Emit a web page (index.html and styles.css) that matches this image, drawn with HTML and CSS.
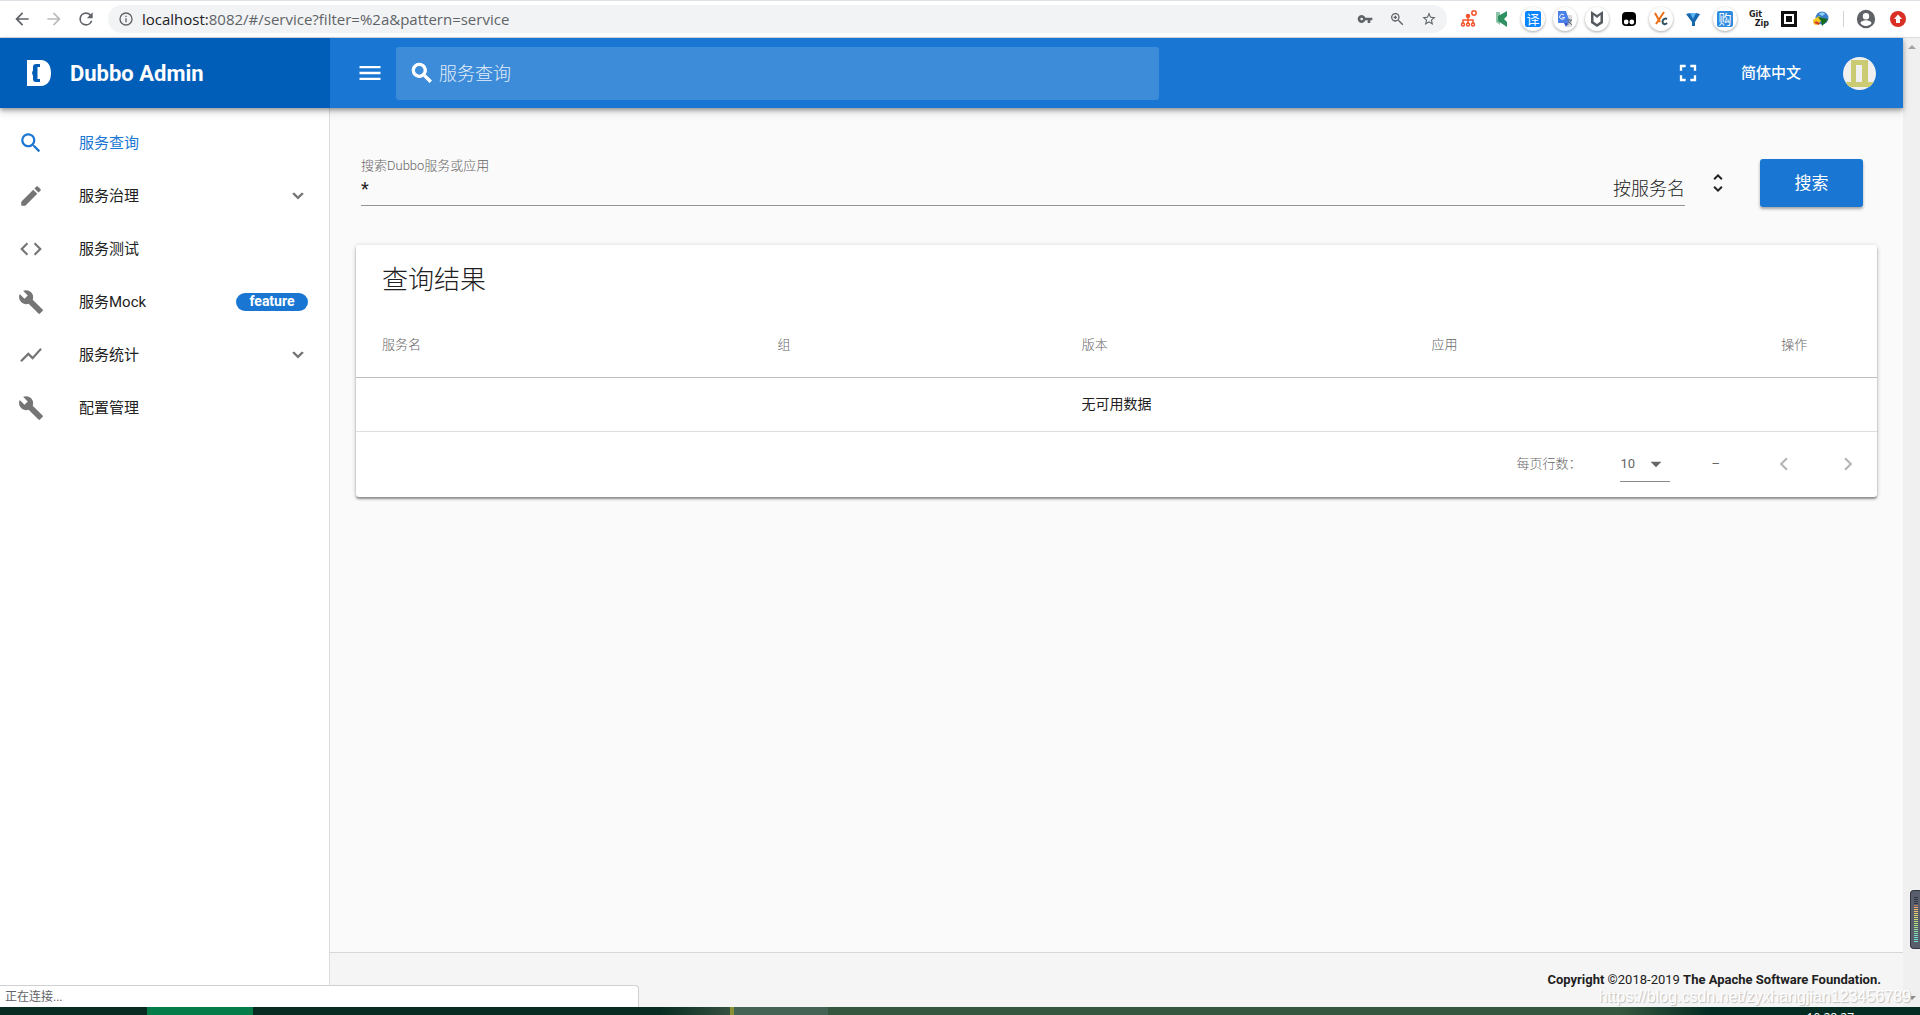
FILE: index.html
```html
<!DOCTYPE html>
<html lang="zh-CN">
<head>
<meta charset="utf-8">
<title>Dubbo Admin</title>
<link rel="stylesheet" href="styles.css">
</head>
<body>
<div class="browser">
  <div class="nav-buttons">
    <button class="plain" aria-label="后退"><svg class="ic20" viewBox="0 0 24 24" fill="#5f6368"><path d="M20 11H7.830l5.590-5.590L12 4l-8 8 8 8 1.410-1.410L7.830 13H20v-2z"/></svg></button>
    <button class="plain" aria-label="前进"><svg class="ic20" viewBox="0 0 24 24" fill="#babcbe"><path d="M12 4l-1.410 1.410L16.170 11H4v2h12.170l-5.580 5.590L12 20l8-8z"/></svg></button>
    <button class="plain" aria-label="刷新"><svg class="ic20" viewBox="0 0 24 24" fill="#5f6368"><path d="M17.650 6.350A7.960 7.960 0 0 0 12 4a8 8 0 1 0 7.730 10h-2.080A6 6 0 1 1 12 6c1.660 0 3.140.69 4.220 1.780L13 11h7V4l-2.350 2.350z"/></svg></button>
  </div>
  <div class="omnibox">
    <svg class="ic16" viewBox="0 0 24 24" fill="#5f6368"><path d="M11 17h2v-6h-2v6zm1-15a10 10 0 1 0 0 20 10 10 0 0 0 0-20zm0 18a8 8 0 1 1 0-16 8 8 0 0 1 0 16zM11 9h2V7h-2v2z"/></svg>
    <div class="url"><span class="host">localhost:</span>8082/#/service?filter=%2a&amp;pattern=service</div>
    <div class="omni-icons">
      <svg class="ic16" viewBox="0 0 24 24" fill="#5f6368"><path d="M12.650 10A6 6 0 1 0 12.650 14H16v4h4v-4h3v-4H12.650zM7 14a2 2 0 1 1 0-4 2 2 0 0 1 0 4z"/></svg>
      <svg class="ic16" viewBox="0 0 24 24" fill="#5f6368"><path d="M15.500 14h-.79l-.28-.27A6.500 6.500 0 1 0 13.730 14.430l.27.28v.79l6 6 1.490-1.490-5.990-6.010zm-6 0a4.500 4.500 0 1 1 0-9 4.500 4.500 0 0 1 0 9zM10.500 7h-2v1.500H7v2h1.500V12h2v-1.500H12v-2h-1.500z"/></svg>
      <svg class="ic16" viewBox="0 0 24 24" fill="#5f6368"><path d="M22 9.240l-7.190-.62L12 2 9.190 8.630 2 9.240l5.460 4.730L5.820 21 12 17.270 18.180 21l-1.630-7.030L22 9.240zM12 15.400l-3.760 2.270 1-4.280-3.320-2.880 4.380-.38L12 6.100l1.710 4.040 4.380.38-3.320 2.880 1 4.280L12 15.400z"/></svg>
    </div>
  </div>
  <div class="extensions">
    <span class="ext"><svg class="ic20" viewBox="0 0 20 20" fill="none" stroke="#f4552f" stroke-width="1.500"><circle cx="15" cy="4" r="2.200"/><circle cx="9" cy="7" r="1.500" fill="#f4552f"/><path d="M9 8v7M4 15v-4h10v4"/><circle cx="4" cy="15.500" r="1.500"/><circle cx="9" cy="15.500" r="1.500"/><circle cx="14" cy="15.500" r="1.500"/></svg></span>
    <span class="ext"><svg class="ic20" viewBox="0 0 20 20"><path fill="#8fc5a8" d="M5 3h4v13l-4-3z"/><path fill="#2f9062" d="M7 7l9-5v5l-3 3 3 3v5l-9-6z"/></svg></span>
    <span class="ext round"><span class="tile bright">译</span></span>
    <span class="ext round"><svg class="ic20" viewBox="0 0 20 20"><path fill="#dadce0" d="M9 6h8v12h-6z"/><path fill="#4a80ea" d="M3 2h8l4 12H3z"/><path d="M9 6a2.500 2.500 0 1 0 .6 2.500H7.400" fill="none" stroke="#fff"/><path d="M12 11h5M14.500 10v1m1.500 0c0 2-2 4-4 5m1-4l4 4" fill="none" stroke="#68717b"/><path fill="#3658c9" d="M9 14h4l-2 4z"/></svg></span>
    <span class="ext round"><svg class="ic20" viewBox="0 0 20 20"><path fill="#555a60" d="M4 2l6 4 6-4v12l-6 4-6-4V2zm2.500 4v6.500L10 15l3.500-2.500V6L10 9z"/></svg></span>
    <span class="ext"><svg class="ic20" viewBox="0 0 20 20"><rect x="3" y="3" width="14" height="14" rx="4"/><circle cx="7.200" cy="13" r="2.400" fill="#fff"/><circle cx="12.800" cy="13" r="2.400" fill="#fff"/></svg></span>
    <span class="ext round"><svg class="ic20" viewBox="0 0 20 20" fill="none" stroke-width="2"><path stroke="#ef6c13" d="M4 4l5 9M13 3L5 15"/><path stroke="#2b5160" d="M16 10c-4-2-6 4-3 5 1 .5 2 0 3-1"/></svg></span>
    <span class="ext"><svg class="ic20" viewBox="0 0 20 20"><path fill="#1769ad" d="M3 5l4-1 3 3 3-3 4 1-5 8v4H9v-4z"/><path fill="#5cb8f0" d="M7 4l3 6 3-6z"/></svg></span>
    <span class="ext round"><span class="tile">购</span></span>
    <span class="ext gitzip"><span>Git</span><span>Zip</span></span>
    <span class="ext"><svg class="ic20" viewBox="0 0 20 20"><path fill="#111" d="M2 2h16v16H2z"/><path fill="#fff" d="M5 5h10v10H5z"/><path fill="#111" d="M7 7h6v6H7z"/></svg></span>
    <span class="ext"><svg class="ic20" viewBox="0 0 20 20"><circle cx="11" cy="9" r="6.500" fill="#3d7fcc"/><path fill="#8fd0f5" d="M8 5c2-2 5-2 6 0l-3 2z"/><path fill="#f5c921" d="M2 11l6-4 3 4-5 5c-3 0-4-2-4-5z"/><path fill="#d64426" d="M3 14l5 2 1-2-4-2z"/><path fill="#176b20" d="M7 8l10 2-2 3-4 4-1-5z"/></svg></span>
  </div>
  <div class="profile">
    <svg class="ic22" viewBox="0 0 24 24" fill="#5f6368"><path d="M12 2a10 10 0 1 0 0 20 10 10 0 0 0 0-20zm0 3.500a3.500 3.500 0 1 1 0 7 3.500 3.500 0 0 1 0-7zm0 14c-2.500 0-4.700-1.100-6-3 0-2 4-3.100 6-3.100s6 1.100 6 3.100c-1.300 1.900-3.500 3-6 3z"/></svg>
    <svg class="ic16" viewBox="0 0 16 16"><circle cx="8" cy="8" r="8" fill="#d93025"/><path fill="#fff" d="M8 3.500l4 4.500H10v4H6V8H4z"/></svg>
  </div>
</div>

<div class="viewport">
  <div class="app">
    <header class="toolbar">
      <div class="brand">
        <svg class="logo" viewBox="0 0 24 26"><path fill="#fff" fill-rule="evenodd" d="M0 0h14c6 0 10 5 10 13s-4 13-10 13H0V0zm13 4H9C7 4 6 5 6 7v3l-1 3 1 3v3c0 2 1 3 3 3h4v-3h-2.500V7H13V4z"/></svg>
        <h1>Dubbo Admin</h1>
      </div>
      <button class="plain menu" aria-label="菜单"><svg class="ic28" viewBox="0 0 24 24" fill="#fff"><path d="M3 18h18v-2H3v2zm0-5h18v-2H3v2zm0-7v2h18V6H3z"/></svg></button>
      <label class="search">
        <svg class="ic26" viewBox="0 0 24 24" fill="#fff" stroke="#fff"><path d="M15.500 14h-.79l-.28-.27A6.500 6.500 0 1 0 13.730 14.430l.27.28v.79l5 4.990L20.490 19l-4.990-5zm-6 0a4.500 4.500 0 1 1 0-9 4.500 4.500 0 0 1 0 9z"/></svg>
        <input type="text" placeholder="服务查询" aria-label="服务查询">
      </label>
      <div class="actions">
        <button class="plain" aria-label="全屏"><svg class="ic28" viewBox="0 0 24 24" fill="#fff"><path d="M7 14H5v5h5v-2H7v-3zm-2-4h2V7h3V5H5v5zm12 7h-3v2h5v-5h-2v3zM14 5v2h3v3h2V5h-5z"/></svg></button>
        <button class="plain lang">简体中文</button>
        <svg class="avatar" viewBox="0 0 33 33" role="img" aria-label="用户"><clipPath id="round"><circle cx="16.500" cy="16.500" r="16.500"/></clipPath><g clip-path="url(#round)"><path fill="#f0f0f0" d="M0 0h33v33H0z"/><path fill="#cbcb73" fill-rule="evenodd" d="M8 3h17v22h6v5H2v-5h6V3zm5 5v17h6V8z"/></g></svg>
      </div>
    </header>

    <div class="body">
      <nav class="sidebar">
        <a class="item active" href="#/service"><svg class="ic26" viewBox="0 0 24 24"><path d="M15.500 14h-.79l-.28-.27A6.500 6.500 0 1 0 13.730 14.430l.27.28v.79l5 4.990L20.490 19l-4.990-5zm-6 0a4.500 4.500 0 1 1 0-9 4.500 4.500 0 0 1 0 9z"/></svg><span>服务查询</span></a>
        <a class="item" href="#/governance"><svg class="ic26" viewBox="0 0 24 24"><path d="M3 17.250V21h3.750L17.810 9.940l-3.750-3.750L3 17.250zM20.710 7.040a1 1 0 0 0 0-1.410l-2.340-2.340a1 1 0 0 0-1.410 0l-1.830 1.830 3.750 3.750 1.830-1.830z"/></svg><span>服务治理</span><svg class="ic20 end" viewBox="0 0 24 24"><path d="M7.410 7.840L12 12.420l4.590-4.580L19 9.250l-7 7-7-7z"/></svg></a>
        <a class="item" href="#/test"><svg class="ic26" viewBox="0 0 24 24"><path d="M9.400 16.600L4.800 12l4.600-4.600L8 6l-6 6 6 6 1.400-1.400zm5.200 0l4.600-4.600-4.600-4.600L16 6l6 6-6 6-1.400-1.400z"/></svg><span>服务测试</span></a>
        <a class="item" href="#/mock"><svg class="ic26" viewBox="0 0 24 24"><path d="M22.700 19l-9.100-9.100c.9-2.300.4-5-1.500-6.900-2-2-5-2.400-7.400-1.300L9 6 6 9 1.600 4.700C.4 7.100.9 10.100 2.900 12.100c1.900 1.900 4.600 2.400 6.900 1.500l9.100 9.100c.4.400 1 .4 1.400 0l2.300-2.300c.5-.4.5-1.100.1-1.400z"/></svg><span>服务Mock</span><span class="badge end">feature</span></a>
        <a class="item" href="#/statistics"><svg class="ic26" viewBox="0 0 24 24"><path d="M3.500 18.490l6-6.010 4 4L22 6.920l-1.410-1.410-7.090 7.970-4-4L2 16.990z"/></svg><span>服务统计</span><svg class="ic20 end" viewBox="0 0 24 24"><path d="M7.410 7.840L12 12.420l4.590-4.580L19 9.250l-7 7-7-7z"/></svg></a>
        <a class="item" href="#/config"><svg class="ic26" viewBox="0 0 24 24"><path d="M22.700 19l-9.100-9.100c.9-2.300.4-5-1.500-6.900-2-2-5-2.400-7.400-1.300L9 6 6 9 1.600 4.700C.4 7.100.9 10.100 2.900 12.100c1.900 1.900 4.600 2.400 6.900 1.500l9.100 9.100c.4.400 1 .4 1.400 0l2.300-2.300c.5-.4.5-1.100.1-1.400z"/></svg><span>配置管理</span></a>
      </nav>

      <div class="page">
        <main>
          <form class="query">
            <div class="field">
              <label for="keyword">搜索Dubbo服务或应用</label>
              <div class="line">
                <input id="keyword" type="text" value="*">
                <select aria-label="查询方式"><option>按服务名</option></select>
              </div>
            </div>
            <svg class="ic24" viewBox="0 0 24 24" fill="#222"><path d="M12 5.830L15.170 9l1.410-1.410L12 3 7.410 7.590 8.830 9 12 5.830zm0 12.340L8.830 15l-1.410 1.410L12 21l4.590-4.590L15.170 15 12 18.170z"/></svg>
            <button class="submit" type="button">搜索</button>
          </form>

          <section class="card">
            <h2>查询结果</h2>
            <table>
              <colgroup><col class="c-name"><col class="c-group"><col class="c-wide"><col class="c-wide"><col></colgroup>
              <thead><tr><th>服务名</th><th>组</th><th>版本</th><th>应用</th><th>操作</th></tr></thead>
              <tbody><tr><td colspan="5">无可用数据</td></tr></tbody>
            </table>
            <div class="pager">
              <label for="rows">每页行数：</label>
              <div class="rows"><select id="rows"><option>10</option></select><svg class="ic26" viewBox="0 0 24 24" fill="#666"><path d="M7 10l5 5 5-5z"/></svg></div>
              <span class="range">–</span>
              <button class="plain page-btn" aria-label="上一页" disabled><svg class="ic26" viewBox="0 0 24 24" fill="#b5b5b5"><path d="M15.410 7.410L14 6l-6 6 6 6 1.410-1.410L10.830 12z"/></svg></button>
              <button class="plain page-btn" aria-label="下一页" disabled><svg class="ic26" viewBox="0 0 24 24" fill="#b5b5b5"><path d="M10 6L8.590 7.410 13.170 12l-4.580 4.590L10 18l6-6z"/></svg></button>
            </div>
          </section>
        </main>
        <footer><b>Copyright</b> ©2018-2019 <b>The Apache Software Foundation.</b></footer>
      </div>
    </div>
  </div>
  <div class="scrollbar"><i class="up"></i><i class="down"></i></div>
  <div class="status">正在连接...</div>
  <div class="watermark">https://blog.csdn.net/zyxhangjian123456789</div>
  <div class="meter"><i></i></div>
</div>
<div class="taskbar"><span>10:28:27</span></div>
</body>
</html>
```
FILE: styles.css
```css
* { box-sizing: border-box; }
body {
  margin: 0;
  min-height: 100vh;
  display: flex;
  flex-direction: column;
  overflow: hidden;
  color: #212121;
  font: 300 15px/20px Roboto, "Noto Sans CJK SC", sans-serif;
}
svg { display: block; flex: none; }
.ic16 { width: 16px; height: 16px; }
.ic20 { width: 20px; height: 20px; }
.ic22 { width: 22px; height: 22px; }
.ic24 { width: 24px; height: 24px; }
.ic26 { width: 26px; height: 26px; }
.ic28 { width: 28px; height: 28px; }
input, select, button { font: inherit; color: inherit; margin: 0; padding: 0; border: 0; background: none; }
input, select { appearance: none; outline: 0; min-width: 0; }
.plain { display: flex; align-items: center; justify-content: center; }

/* Browser toolbar */
.browser {
  height: 38px;
  display: flex;
  align-items: center;
  padding: 0 14px 0 12px;
  background: #fff;
  border-top: 1px solid #dee1e6;
  border-bottom: 1px solid #dadce0;
}
.nav-buttons { display: flex; gap: 12px; }
.omnibox {
  flex: 1;
  height: 28px;
  display: flex;
  align-items: center;
  gap: 8px;
  margin-left: 12px;
  padding: 0 10px;
  border-radius: 14px;
  background: #f1f3f4;
  color: #5f6368;
  font: 400 15px/20px "Open Sans", sans-serif;
}
.host { color: #202124; }
.omni-icons { display: flex; gap: 16px; margin-left: auto; }
.extensions { display: flex; gap: 8px; margin-left: 10px; }
.ext {
  width: 24px;
  height: 24px;
  display: flex;
  align-items: center;
  justify-content: center;
  border-radius: 50%;
}
.round { background: #fff; box-shadow: 0 1px 3px rgba(0, 0, 0, .35); }
.tile {
  width: 16px;
  height: 16px;
  border-radius: 2px;
  background: #2e8bdf;
  color: #fff;
  font: 400 13px/16px "Noto Sans CJK SC", sans-serif;
  text-align: center;
}
.bright { background: #0a84ff; }
.gitzip {
  flex-direction: column;
  color: #222;
  font: 700 8px/9px "DejaVu Sans", sans-serif;
}
.gitzip span:first-child { align-self: flex-start; padding-left: 4px; }
.gitzip span:last-child { align-self: flex-end; }
.profile {
  display: flex;
  align-items: center;
  gap: 13px;
  margin-left: 10px;
  padding-left: 12px;
  position: relative;
}
.profile::before {
  content: "";
  position: absolute;
  left: 0;
  width: 1px;
  height: 16px;
  background: #d0d2d5;
}

/* Page area */
.viewport { flex: 1; display: flex; position: relative; }
.app { flex: 1; display: flex; flex-direction: column; background: #fafafa; }
.toolbar {
  height: 70px;
  display: flex;
  align-items: center;
  position: relative;
  background: #1976d2;
  color: #fff;
  box-shadow: 0 2px 4px rgba(0, 0, 0, .3), 0 4px 8px rgba(0, 0, 0, .16);
}
.brand {
  width: 330px;
  align-self: stretch;
  display: flex;
  align-items: center;
  gap: 19px;
  padding-left: 27px;
  background: #005eb8;
}
.logo { width: 24px; height: 26px; }
h1 { margin: 0; padding-top: 2px; font: 700 22px/28px Roboto, sans-serif; }
.menu { margin: 0 12px 0 26px; }
.search {
  width: 763px;
  height: 53px;
  display: flex;
  align-items: center;
  gap: 4px;
  padding-left: 13px;
  border-radius: 3px;
  background: rgba(255, 255, 255, .16);
  font-size: 18px;
}
.search input { flex: 1; height: 28px; }
.search input::placeholder { color: #fff; opacity: .85; }
.actions { display: flex; align-items: center; margin-left: auto; padding-right: 27px; }
.lang { margin: 0 42px 0 39px; font-size: 15px; font-weight: 500; }
.avatar { width: 33px; height: 33px; }

.body { flex: 1; display: flex; }
.sidebar {
  width: 330px;
  padding-top: 8px;
  background: #fff;
  border-right: 1px solid #dcdcdc;
}
.item {
  height: 53px;
  display: flex;
  align-items: center;
  padding: 0 21px 0 18px;
  color: #212121;
  fill: #757575;
  font-weight: 400;
  text-decoration: none;
}
.item > span:nth-child(2) { margin-left: 35px; }
.item.active { color: #1976d2; fill: #1976d2; }
.end { margin-left: auto; }
.badge {
  width: 72px;
  height: 18px;
  border-radius: 9px;
  background: #1976d2;
  color: #fff;
  font-size: 14px;
  line-height: 17px;
  font-weight: 700;
  text-align: center;
}

.page { flex: 1; display: flex; flex-direction: column; }
main { flex: 1; padding: 49px 26px 26px; }
.query {
  display: flex;
  align-items: center;
  padding: 0 14px 0 5px;
}
.field { flex: 1; padding-bottom: 2px; }
.field label { display: block; font-size: 13px; line-height: 18px; color: #666; }
.line { height: 31px; display: flex; border-bottom: 1px solid #949494; }
.line input { flex: 1; height: 26px; font-size: 18px; font-weight: 400; }
.line select { height: 28px; width: 88px; font-size: 18px; text-align-last: right; }
.query > svg { margin: 0 30px 0 21px; }
.submit {
  width: 103px;
  height: 48px;
  border-radius: 3px;
  background: #1976d2;
  color: #fff;
  font-size: 17px;
  font-weight: 400;
  box-shadow: 0 2px 3px rgba(0, 0, 0, .35);
}
.card {
  margin-top: 37px;
  border-radius: 3px;
  background: #fff;
  box-shadow: 0 2px 2px rgba(0, 0, 0, .35), 0 1px 5px rgba(0, 0, 0, .2);
}
h2 { margin: 0; padding: 18px 26px 16px; font-size: 26px; line-height: 34px; font-weight: 300; }
table { width: 100%; border-collapse: collapse; table-layout: fixed; }
.c-name { width: 26%; }
.c-group { width: 20%; }
.c-wide { width: 23%; }
th {
  height: 64px;
  padding: 0 26px;
  color: #666;
  font-size: 13px;
  font-weight: 300;
  text-align: left;
  border-bottom: 1px solid #bdbdbd;
}
td { height: 54px; padding: 0; font-size: 14px; font-weight: 400; text-align: center; border-bottom: 1px solid #dedede; }
.pager {
  height: 65px;
  display: flex;
  align-items: center;
  justify-content: flex-end;
  padding-right: 16px;
  color: #666;
  font-size: 13px;
  font-weight: 400;
}
.pager label { font-weight: 300; }
.rows {
  width: 50px;
  height: 36px;
  display: flex;
  align-items: center;
  margin: 0 41px 0 39px;
  border-bottom: 1px solid #8a8a8a;
}
.rows select { width: 23px; font-size: 13px; }
.range { margin-right: 51px; }
.page-btn { width: 26px; height: 26px; }
.page-btn + .page-btn { margin-left: 38px; }
footer {
  height: 55px;
  padding: 17px 22px 0;
  border-top: 1px solid #d8d8d8;
  background: #f5f5f5;
  font-size: 13px;
  font-weight: 400;
  text-align: right;
}
footer b { font-weight: 700; }

/* Scrollbar and overlays */
.scrollbar {
  width: 17px;
  display: flex;
  flex-direction: column;
  align-items: center;
  justify-content: space-between;
  padding: 7px 0;
  background: #f0f0f0;
}
.scrollbar i { border: 4px solid transparent; }
.scrollbar .up { border-top: 0; border-bottom-color: #a3a3a3; }
.scrollbar .down { border-bottom: 0; border-top-color: #8a8a8a; }
.status {
  position: absolute;
  left: 0;
  bottom: 0;
  width: 639px;
  height: 22px;
  padding-left: 5px;
  border: 1px solid #d0d0d0;
  border-width: 1px 1px 0 0;
  border-top-right-radius: 4px;
  background: #fff;
  color: #5f6368;
  font-size: 12px;
  font-weight: 400;
  line-height: 22px;
}
.watermark {
  position: absolute;
  right: 9px;
  bottom: 0;
  color: #fff;
  font: 400 16px/20px "Liberation Sans", sans-serif;
  text-shadow: 1px 1px 1px #bbb;
}
.meter {
  position: absolute;
  right: 0;
  bottom: 58px;
  width: 10px;
  height: 59px;
  padding: 6px 2px 6px 3px;
  border: 1px solid #33363f;
  border-right: 0;
  border-radius: 4px 0 0 4px;
  background: #595e6d;
}
.meter i {
  display: block;
  height: 45px;
  background:
    repeating-linear-gradient(transparent 0 1px, #595e6d 1px 2px),
    linear-gradient(#333640 0 16%, #f0986a 20%, #ecd267 35%, #b5e07d 60%, #70e0c8 90%);
}
.taskbar {
  height: 8px;
  overflow: hidden;
  background: linear-gradient(90deg, #082c22 147px, #047c49 147px 253px, #082c22 253px 660px, #35503f 730px, #8a9134 730px 734px, #456355 734px 828px, #36573f 828px 1580px, #36573f 1620px, #042c22 1710px);
  color: #fff;
  font: 400 12px/16px "Open Sans", sans-serif;
  text-align: right;
}
.taskbar span { display: block; padding: 3px 66px 0 0; }
```
